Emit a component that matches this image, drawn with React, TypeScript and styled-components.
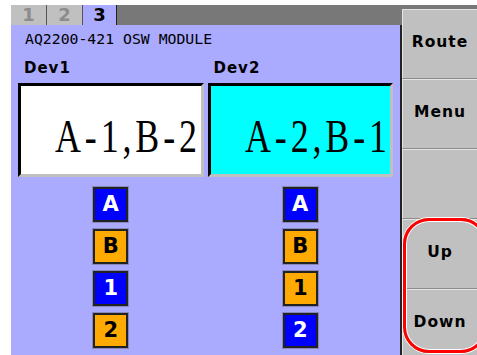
import React from "react";
import styled, { createGlobalStyle } from "styled-components";

const GlobalStyle = createGlobalStyle`
  html, body {
    margin: 0;
    padding: 0;
    background: #ffffff;
  }
`;

const palette = {
  lavender: "#aaaaff",
  gray: "#c0c0c0",
  darkGray: "#787878",
  cyan: "#00ffff",
  blue: "#0000ff",
  orange: "#ffaa00",
};

const Screen = styled.div`
  width: 477px;
  height: 355px;
  padding-top: 5px;
  box-sizing: border-box;
  display: flex;
  overflow: hidden;
  background: #ffffff;
`;

const Main = styled.div`
  width: 402px;
  flex-shrink: 0;
  display: flex;
  flex-direction: column;
`;

const TabBar = styled.div`
  height: 20px;
  margin-left: 11px;
  display: flex;
  background: ${palette.darkGray};
`;

const Tab = styled.div<{ $active?: boolean }>`
  width: ${(p) => (p.$active ? "34px" : "36px")};
  box-sizing: border-box;
  display: flex;
  align-items: center;
  justify-content: center;
  background: ${(p) => (p.$active ? palette.lavender : palette.gray)};
  border-right: 1px solid ${(p) => (p.$active ? "#222" : "#555")};
  color: ${(p) => (p.$active ? "#000" : "#8c8c8c")};
  font-family: "DejaVu Sans", sans-serif;
  font-weight: bold;
  font-size: 18px;
  line-height: 20px;
`;

const Panel = styled.div`
  flex: 1;
  margin-left: 11px;
  padding: 6px 7px 0;
  background: ${palette.lavender};
  border-right: 2px solid #222;
`;

const ModuleName = styled.div`
  font-family: "DejaVu Sans Mono", monospace;
  font-size: 14.8px;
  line-height: 16px;
  color: #000;
  padding-left: 7px;
`;

const Columns = styled.div`
  margin-top: 12px;
  display: grid;
  grid-template-columns: repeat(2, minmax(0, 1fr));
  column-gap: 4px;
`;

const Column = styled.div`
  display: flex;
  flex-direction: column;
  min-width: 0;
`;

const DevLabel = styled.div`
  font-family: "DejaVu Sans", sans-serif;
  font-weight: bold;
  font-size: 15px;
  letter-spacing: 1px;
  line-height: 18px;
  padding-left: 6px;
`;

const Route = styled.div<{ $bg: string }>`
  margin-top: 6px;
  height: 94px;
  box-sizing: border-box;
  border: 3px solid;
  border-color: #000 ${palette.gray} ${palette.gray} #000;
  background: ${(p) => p.$bg};
  padding: 28px 0 0 34px;
  white-space: nowrap;
  overflow: hidden;
`;

const RouteText = styled.span`
  display: inline-block;
  font-family: "Liberation Serif", serif;
  font-size: 46px;
  line-height: 46px;
  letter-spacing: 5px;
  color: #000;
  transform: scaleX(0.78);
  transform-origin: left center;
`;

const Badges = styled.div`
  margin-top: 10px;
  display: flex;
  flex-direction: column;
  align-items: center;
  gap: 7px;
`;

const Badge = styled.div<{ $kind: "blue" | "orange" }>`
  width: 35px;
  height: 35px;
  box-sizing: border-box;
  display: flex;
  align-items: center;
  justify-content: center;
  border: 2px solid #222;
  box-shadow: 0 0 0 1px #8888bb;
  background: ${(p) => (p.$kind === "blue" ? palette.blue : palette.orange)};
  color: ${(p) => (p.$kind === "blue" ? "#fff" : "#000")};
  font-family: "DejaVu Sans", sans-serif;
  font-weight: bold;
  font-size: 21px;
  line-height: 1;
`;

const Side = styled.div`
  flex: 1;
  padding-top: 4px;
  display: flex;
  flex-direction: column;
  background: ${palette.darkGray};
`;

const SideButton = styled.div`
  height: 70px;
  flex-shrink: 0;
  box-sizing: border-box;
  display: flex;
  align-items: center;
  justify-content: center;
  padding-bottom: 4px;
  background: ${palette.gray};
  border-top: 1px solid #e4e4e4;
  border-left: 1px solid #e4e4e4;
  border-bottom: 1px solid #8a8a8a;
  font-family: "DejaVu Sans", sans-serif;
  font-weight: bold;
  font-size: 15.5px;
  letter-spacing: 1px;
  color: #000;
`;

const Group = styled.div`
  position: relative;
`;

const Ring = styled.div`
  position: absolute;
  left: 1px;
  top: -1px;
  width: 84px;
  height: 135px;
  box-sizing: border-box;
  border: 3px solid #ff0000;
  border-radius: 26px;
  box-shadow: inset 0 0 0 1px #ffffff, 0 0 0 1px #ffffff;
  pointer-events: none;
`;

type Kind = "blue" | "orange";

const devices: { name: string; route: string; bg: string; badges: [string, Kind][] }[] = [
  {
    name: "Dev1",
    route: "A-1,B-2",
    bg: "#ffffff",
    badges: [
      ["A", "blue"],
      ["B", "orange"],
      ["1", "blue"],
      ["2", "orange"],
    ],
  },
  {
    name: "Dev2",
    route: "A-2,B-1",
    bg: palette.cyan,
    badges: [
      ["A", "blue"],
      ["B", "orange"],
      ["1", "orange"],
      ["2", "blue"],
    ],
  },
];

export default function App() {
  return (
    <>
      <GlobalStyle />
      <Screen>
        <Main>
          <TabBar>
            <Tab>1</Tab>
            <Tab>2</Tab>
            <Tab $active>3</Tab>
          </TabBar>
          <Panel>
            <ModuleName>AQ2200-421 OSW MODULE</ModuleName>
            <Columns>
              {devices.map((dev) => (
                <Column key={dev.name}>
                  <DevLabel>{dev.name}</DevLabel>
                  <Route $bg={dev.bg}>
                    <RouteText>{dev.route}</RouteText>
                  </Route>
                  <Badges>
                    {dev.badges.map(([label, kind]) => (
                      <Badge key={label} $kind={kind}>
                        {label}
                      </Badge>
                    ))}
                  </Badges>
                </Column>
              ))}
            </Columns>
          </Panel>
        </Main>
        <Side>
          <SideButton>Route</SideButton>
          <SideButton>Menu</SideButton>
          <SideButton />
          <Group>
            <SideButton>Up</SideButton>
            <SideButton>Down</SideButton>
            <Ring />
          </Group>
        </Side>
      </Screen>
    </>
  );
}
